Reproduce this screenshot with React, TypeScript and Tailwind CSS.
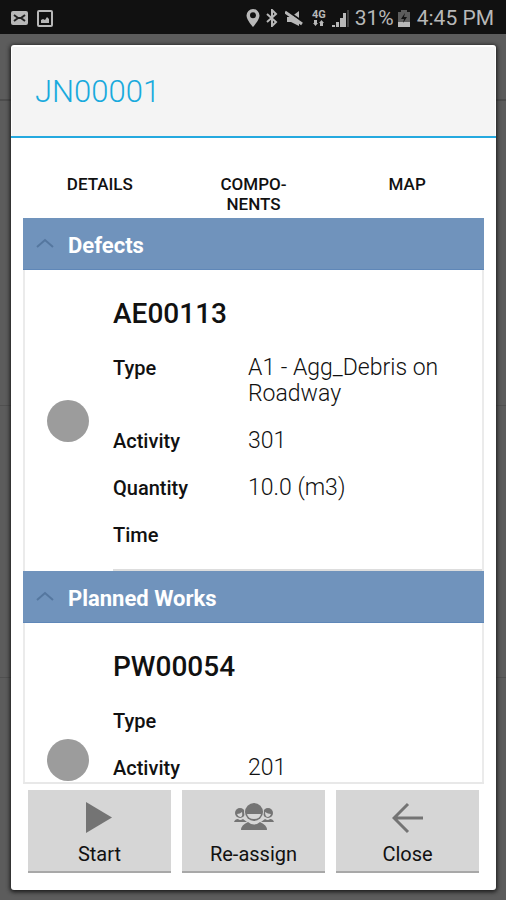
const defects = [
  { label: 'Type', value: 'A1 - Agg_Debris on Roadway' },
  { label: 'Activity', value: '301' },
  { label: 'Quantity', value: '10.0 (m3)' },
  { label: 'Time', value: '' },
]

const plannedWorks = [
  { label: 'Type', value: '' },
  { label: 'Activity', value: '201' },
]

type Field = { label: string; value: string }

function StatusBar() {
  return (
    <header className="flex h-[34px] shrink-0 items-center bg-[#111111] pt-[2px] pr-3 pl-[11px] text-[#b8b8b8]">
      {/* notifications */}
      <svg width="17" height="14" viewBox="0 0 17 14">
        <rect width="17" height="14" rx="2" fill="currentColor" />
        <path d="M3 4l4 3-4 3M14 4l-4 3 4 3M6 7h5" fill="none" stroke="#222" strokeWidth="2" />
      </svg>
      <svg className="ml-[9px]" width="16" height="17" viewBox="0 0 16 17">
        <rect x="1" y="1" width="14" height="15" rx="1" fill="none" stroke="currentColor" strokeWidth="2" />
        <path d="M4 13V10l2-1 2 1 2-3 2 2v4z" fill="currentColor" />
      </svg>
      <div className="ml-auto flex items-center">
        <svg width="14" height="18" viewBox="0 0 14 18">
          <path d="M7 0a6.500 6.500 0 0 0-6.500 6.500C.5 11 7 18 7 18s6.500-7 6.500-11.500A6.500 6.500 0 0 0 7 0zm0 3.300a3 3 0 1 1 0 6 3 3 0 0 1 0-6z" fill="currentColor" fillRule="evenodd" />
        </svg>
        <svg className="ml-[6px]" width="12" height="18" viewBox="0 0 12 18">
          <path d="M1 5l9 8-4 4V1l4 4-9 8" fill="none" stroke="currentColor" strokeWidth="2" />
        </svg>
        <svg className="ml-[7px]" width="18" height="17" viewBox="0 0 18 17">
          <path d="M2 7h4l8-6v15l-8-4H2z" fill="currentColor" />
          <path d="M1 0l17 12" stroke="#111" strokeWidth="2" />
          <path d="M0 2l17 12" stroke="currentColor" strokeWidth="3" />
        </svg>
        <div className="ml-[9px] flex flex-col items-center">
          <span className="text-[11px] leading-[10px] font-bold">4G</span>
          <svg width="11" height="6" viewBox="0 0 11 6">
            <path d="M0 3l2.500 3L5 3H4V0H1v3zM6 3l2.500-3L11 3h-1v3H7V3z" fill="currentColor" />
          </svg>
        </div>
        <svg className="ml-[6px]" width="18" height="17" viewBox="0 0 18 17">
          <path d="M0 17v-2h3v2zM4 17v-5h3v5zM8 17V8h3v9zM11 17V3h3v14z" fill="currentColor" />
          <path d="M15 17V0h2v17z" fill="#404040" />
        </svg>
        <span className="ml-[5px] text-[21px] leading-6">31%</span>
        <svg className="ml-1" width="12" height="17" viewBox="0 0 12 17">
          <path d="M3 0h6v2h3v15H0V2h3z" fill="#5c5c5c" />
          <path d="M0 12h12v5H0z" fill="currentColor" />
          <path d="M7 3L3 9h3l-1 4 4-6H6z" fill="#111" />
        </svg>
        <span className="ml-[7px] text-[21px] leading-6">4:45 PM</span>
      </div>
    </header>
  )
}

function SectionHeader({ title }: { title: string }) {
  return (
    <h2>
      <button type="button" aria-expanded="true" className="flex h-[52px] w-full items-center border-b border-[#5f87b8] bg-[#7093bc] pt-[3px] pl-[13px] text-left text-[22px] font-bold text-white">
        <svg className="mr-[14px] mb-[4px]" width="18" height="10" viewBox="0 0 18 10">
          <path d="M1 9l8-7 8 7" fill="none" stroke="#55779f" strokeWidth="2" />
        </svg>
        {title}
      </button>
    </h2>
  )
}

function Item({ code, fields }: { code: string; fields: Field[] }) {
  return (
    <div className="flex min-h-[274px] items-center border-x-2 border-[#ebebeb] pl-[22px]">
      <span className="size-[42px] shrink-0 rounded-full bg-[#9c9c9c]" />
      <div className="ml-6 flex-1 self-stretch border-b-2 border-[#dddddd] pt-7 pb-[21px]">
        <h3 className="text-[28px] leading-8 font-medium">{code}</h3>
        <dl className="mt-[25px] flex flex-col gap-[21px] pr-5">
          {fields.map((field) => (
            <div key={field.label} className="flex text-[20px] leading-[26px]">
              <dt className="w-[135px] shrink-0 font-medium">{field.label}</dt>
              <dd className="text-[23px] font-light">{field.value}</dd>
            </div>
          ))}
        </dl>
      </div>
    </div>
  )
}

export default function App() {
  return (
    <div className="flex h-screen flex-col bg-[#5c5c5c] bg-[linear-gradient(#5c5c5c_99px,#4c4c4c_99px,#4c4c4c_101px,#5c5c5c_101px,#5c5c5c_405px,#505050_405px,#505050_406px,#5c5c5c_406px,#5c5c5c_677px,#505050_677px,#505050_678px,#5c5c5c_678px)] font-['Roboto',sans-serif] text-[#111111]">
      <StatusBar />
      <main className="mt-[11px] mr-[10px] mb-[10px] ml-[11px] flex min-h-0 flex-1 flex-col rounded-[3px] bg-white shadow-[0_1px_4px_1px_#181818]">
        <div className="shrink-0 border-b-2 border-[#25a9df] px-px pt-[2px]">
          <h1 className="flex h-[89px] items-center bg-[#f4f4f4] pt-[2px] pl-[23px] text-[31px] font-light text-[#19aadd]">JN00001</h1>
        </div>

        {/* tabs */}
        <nav className="mx-3 grid h-20 shrink-0 grid-cols-3 items-start pt-9 text-[17px] leading-5 font-medium">
          <button type="button">DETAILS</button>
          <button type="button">COMPO-<br />NENTS</button>
          <button type="button">MAP</button>
        </nav>

        <section className="mx-3 min-h-0 flex-1 overflow-y-auto border-b-2 border-[#e8e8e8] [scrollbar-width:none]">
          <SectionHeader title="Defects" />
          <Item code="AE00113" fields={defects} />
          <SectionHeader title="Planned Works" />
          <Item code="PW00054" fields={plannedWorks} />
        </section>

        {/* actions */}
        <footer className="grid shrink-0 grid-cols-3 gap-[11px] px-[17px] pt-[6px] pb-[17px] text-[20px] leading-6">
          <button type="button" className="flex h-[83px] flex-col items-center border-b-2 border-[#a8a8a8] bg-[#d6d6d6] pt-3">
            <svg width="32" height="32" viewBox="0 0 32 32">
              <path d="M2 0v31l26-15.500z" fill="#747474" />
            </svg>
            <span className="mt-2">Start</span>
          </button>
          <button type="button" className="flex h-[83px] flex-col items-center border-b-2 border-[#a8a8a8] bg-[#d6d6d6] pt-3">
            <svg width="40" height="32" viewBox="0 0 40 32" fill="#747474">
              {/* people at the back */}
              <circle cx="6" cy="11" r="5" />
              <circle cx="34" cy="11" r="5" />
              <path d="M3 12q3 0 5-2 1 5-2 5-2 0-3-3zM31 10q3 2 6 2-1 3-3 3-3 0-3-5z" fill="#d6d6d6" />
              <path d="M0 20q1-3 4-3 2 2 5 0l4 3zM40 20q-1-3-4-3-2 2-5 0l-4 3z" />
              {/* person in front */}
              <circle cx="20" cy="10" r="10" fill="#d6d6d6" />
              <circle cx="20" cy="10" r="9" />
              <path d="M13 12h14q-1 5-7 5t-7-5z" fill="#d6d6d6" />
              <path d="M7 28q0-5 7-8 6 5 12 0 7 3 7 8z" />
            </svg>
            <span className="mt-2">Re-assign</span>
          </button>
          <button type="button" className="flex h-[83px] flex-col items-center border-b-2 border-[#a8a8a8] bg-[#d6d6d6] pt-3">
            <svg width="32" height="32" viewBox="0 0 32 32">
              <path d="M31 16H2M16 2L2 16l14 14" fill="none" stroke="#747474" strokeWidth="3" />
            </svg>
            <span className="mt-2">Close</span>
          </button>
        </footer>
      </main>
    </div>
  )
}
